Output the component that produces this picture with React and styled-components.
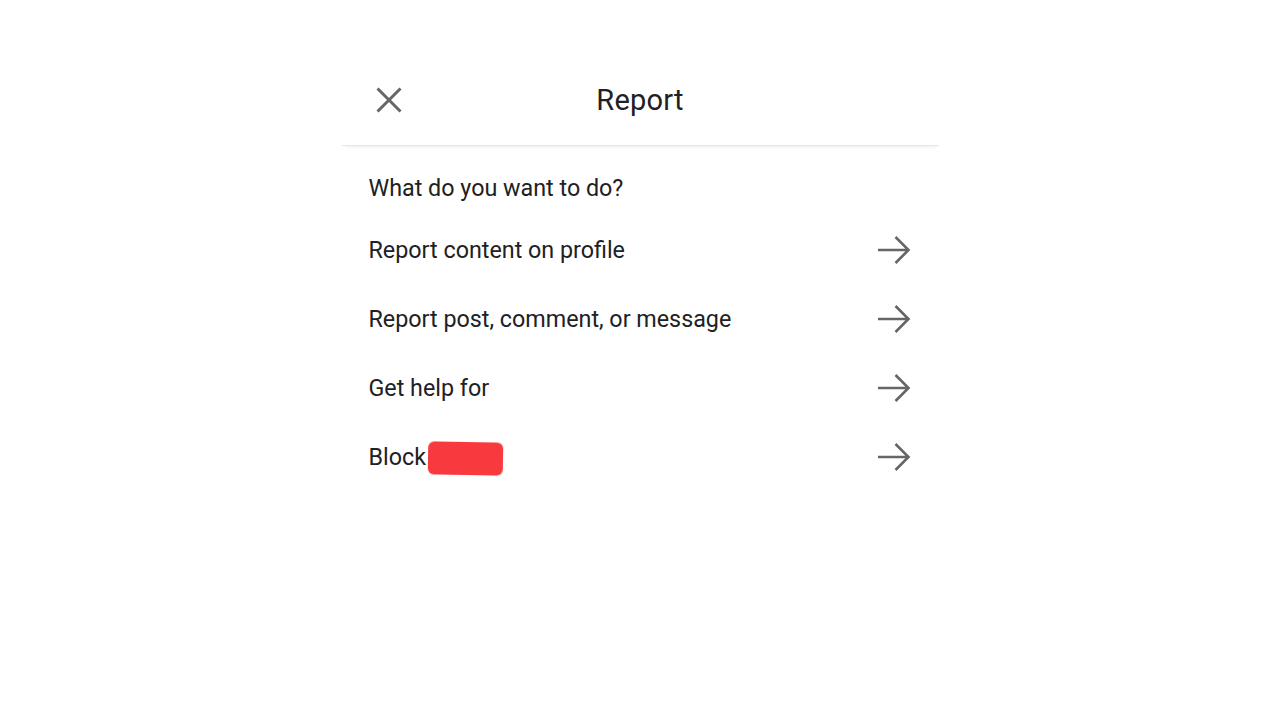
import styled, { createGlobalStyle } from "styled-components";

const GlobalStyle = createGlobalStyle`
  html, body {
    margin: 0;
    padding: 0;
    background: #ffffff;
  }
  body {
    font-family: "Roboto", "Noto Sans", "Liberation Sans", sans-serif;
    color: #202124;
  }
`;

const Page = styled.div`
  width: 1280px;
  height: 720px;
  display: flex;
  justify-content: center;
  padding-top: 54px;
  box-sizing: border-box;
`;

const Sheet = styled.div`
  width: 597px;
  display: flex;
  flex-direction: column;
`;

const Header = styled.div`
  position: relative;
  height: 91px;
  display: flex;
  align-items: center;
  justify-content: center;
  border-bottom: 1px solid #e6e6e6;
  box-shadow: 0 4px 3px -3px rgba(0, 0, 0, 0.08);
`;

const CloseButton = styled.button`
  position: absolute;
  left: 33px;
  top: 50%;
  transform: translateY(-50%);
  border: none;
  background: transparent;
  padding: 0;
  width: 28px;
  height: 28px;
  display: flex;
  align-items: center;
  justify-content: center;
  cursor: pointer;
`;

const Title = styled.h1`
  margin: 0;
  font-size: 29px;
  font-weight: 400;
  color: #202124;
  letter-spacing: 0.2px;
`;

const Body = styled.div`
  padding: 27px 28px 0 27px;
  display: flex;
  flex-direction: column;
`;

const Question = styled.div`
  font-size: 23.3px;
  line-height: 30px;
  margin-bottom: 12px;
  color: #202124;
`;

const Row = styled.div`
  height: 69px;
  display: flex;
  align-items: center;
  justify-content: space-between;
  cursor: pointer;
`;

const RowLabel = styled.span`
  font-size: 23.3px;
  display: flex;
  align-items: center;
  color: #202124;
`;

const Redacted = styled.span`
  display: inline-block;
  width: 75px;
  height: 33px;
  margin-left: 2px;
  margin-top: 4px;
  background: #f8393d;
  border-radius: 6px;
  transform: rotate(1deg);
  filter: blur(0.4px);
`;

const CloseIcon = () => (
  <svg width="26" height="26" viewBox="0 0 26 26">
    <path d="M1.5 1.5 L24.5 24.5 M24.5 1.5 L1.5 24.5" stroke="#666" strokeWidth="3" fill="none" />
  </svg>
);

const ArrowIcon = () => (
  <svg width="34" height="30" viewBox="0 0 34 30">
    <path
      d="M1 15 H31.5 M18.5 2 L31.5 15 L18.5 28"
      stroke="#666"
      strokeWidth="2.6"
      fill="none"
      strokeLinejoin="miter"
    />
  </svg>
);

const options = [
  { label: "Report content on profile" },
  { label: "Report post, comment, or message" },
  { label: "Get help for" },
  { label: "Block", redacted: true },
];

const App = () => {
  return (
    <Page>
      <GlobalStyle />
      <Sheet>
        <Header>
          <CloseButton aria-label="Close">
            <CloseIcon />
          </CloseButton>
          <Title>Report</Title>
        </Header>
        <Body>
          <Question>What do you want to do?</Question>
          {options.map((o) => (
            <Row key={o.label}>
              <RowLabel>
                {o.label}
                {o.redacted && <Redacted />}
              </RowLabel>
              <ArrowIcon />
            </Row>
          ))}
        </Body>
      </Sheet>
    </Page>
  );
};

export default App;
